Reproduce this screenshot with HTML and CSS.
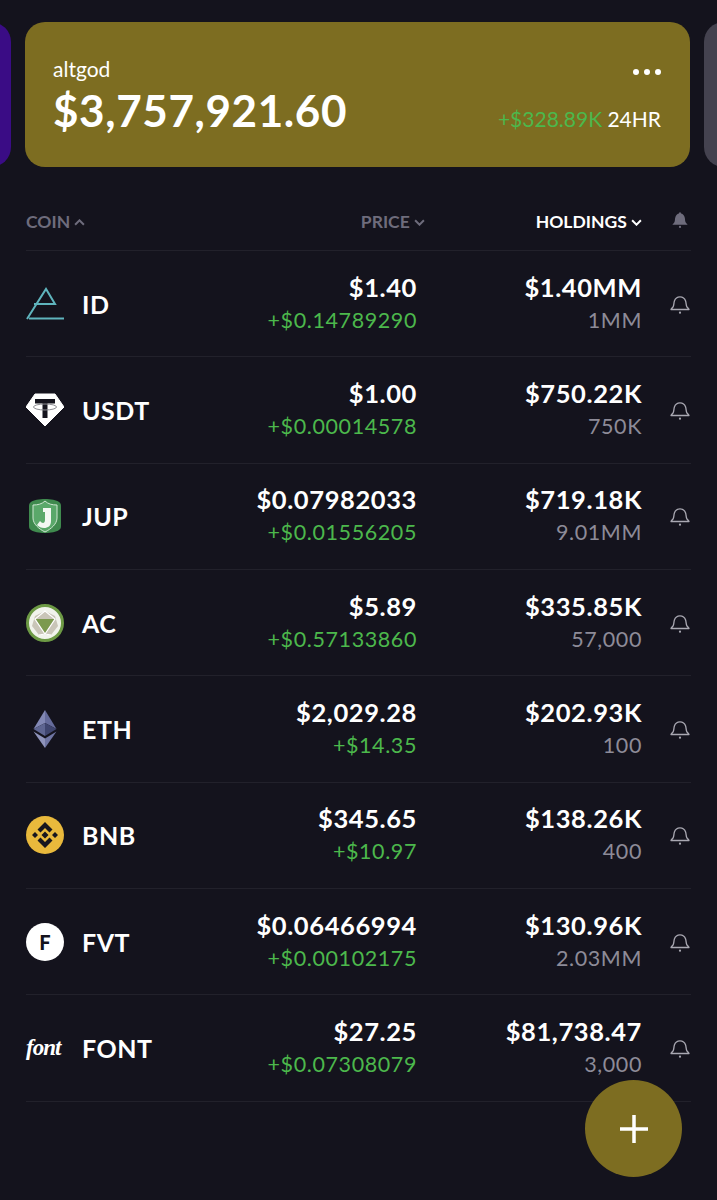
FILE: index.html
```html
<!DOCTYPE html>
<html lang="en">
<head>
    <meta charset="UTF-8">
    <meta name="viewport" content="width=device-width, initial-scale=1.0">
    <title>Portfolio</title>
    <link rel="stylesheet" href="styles.css">
</head>
<body>
    <svg class="defs" width="0" height="0">
        <symbol id="bell" viewBox="0 0 22 22">
            <path d="M2 16.5c0-.8 1.2-1.300 2.100-2.700 1-1.600.6-3.800 1.300-5.800C6.200 5.600 8.300 3.800 11 3.800s4.800 1.800 5.600 4.200c.7 2 .3 4.200 1.300 5.800.9 1.400 2.100 1.900 2.100 2.700z" fill="none" stroke="currentColor" stroke-width="1.300" stroke-linejoin="round"/>
            <circle cx="11" cy="19.700" r="1.100" fill="currentColor"/>
        </symbol>
    </svg>

    <div class="cards">
        <div class="side-card side-left"></div>
        <div class="card">
            <div class="card-top">
                <span class="card-name">altgod</span>
                <span class="dots"><i></i><i></i><i></i></span>
            </div>
            <div class="card-bottom">
                <span class="card-total">$3,757,921.60</span>
                <span class="card-change"><span class="green">+$328.89K</span> 24HR</span>
            </div>
        </div>
        <div class="side-card side-right"></div>
    </div>

    <div class="table">
        <div class="head">
            <span class="head-coin">COIN
                <svg class="caret" viewBox="0 0 10 6"><path d="M1 5l4-4 4 4" fill="none" stroke="currentColor" stroke-width="1.800"/></svg>
            </span>
            <span class="head-price">PRICE
                <svg class="caret" viewBox="0 0 10 6"><path d="M1 1l4 4 4-4" fill="none" stroke="currentColor" stroke-width="1.800"/></svg>
            </span>
            <span class="head-holdings">HOLDINGS
                <svg class="caret" viewBox="0 0 10 6"><path d="M1 1l4 4 4-4" fill="none" stroke="currentColor" stroke-width="1.800"/></svg>
            </span>
            <svg class="head-bell" viewBox="0 0 18 18">
                <path d="M1.500 13.800c0-.8 1.300-1.200 1.900-2.500.8-1.700.3-3.700 1.100-5.600C5.200 3.900 6.600 2.800 8 2.500 8 1.800 8.400 1.200 9 1.200s1 .6 1 1.300c1.400.3 2.800 1.400 3.500 3.200.8 1.900.3 3.900 1.100 5.600.6 1.300 1.900 1.700 1.900 2.500z" fill="currentColor"/>
                <circle cx="9" cy="15.900" r="1.100" fill="currentColor"/>
            </svg>
        </div>

        <div class="row">
            <div class="coin">
                <svg class="icon" viewBox="0 0 38 34">
                    <path d="M1 32L20 2l9 15H8" fill="none" stroke="#5fb4bd" stroke-width="2"/>
                    <path d="M3 31.500h35" stroke="#5fb4bd" stroke-width="2"/>
                </svg>
                <span class="symbol">ID</span>
            </div>
            <div class="price"><span class="big">$1.40</span><span class="green">+$0.14789290</span></div>
            <div class="holdings"><span class="big">$1.40MM</span><span class="grey">1MM</span></div>
            <svg class="bell"><use href="#bell"/></svg>
        </div>

        <div class="row">
            <div class="coin">
                <svg class="icon" viewBox="0 0 38 34">
                    <path d="M9 1h20l9 13-19 19L0 14z" fill="#fff" stroke="#fff" stroke-linejoin="round"/>
                    <path d="M9 6h20v4.500h-7.500V25h-5V10.500H9z" fill="#15141e"/>
                    <ellipse cx="19" cy="14" rx="11.500" ry="3" fill="none" stroke="#8c8c92" stroke-width="1"/>
                </svg>
                <span class="symbol">USDT</span>
            </div>
            <div class="price"><span class="big">$1.00</span><span class="green">+$0.00014578</span></div>
            <div class="holdings"><span class="big">$750.22K</span><span class="grey">750K</span></div>
            <svg class="bell"><use href="#bell"/></svg>
        </div>

        <div class="row">
            <div class="coin">
                <svg class="icon" viewBox="0 0 38 38">
                    <path d="M5 5c5-4 23-4 28 0 2 1 2 3 2 5v18c0 2 0 4-2 5-5 4-23 4-28 0-2-1-2-3-2-5V10c0-2 0-4 2-5z" fill="#3f8a4e"/>
                    <path d="M19 4c3 3 7 4 12 4v13c0 6-6 11-12 14C13 32 7 27 7 21V8c5 0 9-1 12-4z" fill="#5aa86a" stroke="#cfe6d2" stroke-width="1"/>
                    <path d="M17 11h8v13c0 5-3 7-7 7-3 0-5-1-7-3l3-4c1 1 2 2 3 2 1 0 2-1 2-3v-8h-2z" fill="#f2f7f2"/>
                </svg>
                <span class="symbol">JUP</span>
            </div>
            <div class="price"><span class="big">$0.07982033</span><span class="green">+$0.01556205</span></div>
            <div class="holdings"><span class="big">$719.18K</span><span class="grey">9.01MM</span></div>
            <svg class="bell"><use href="#bell"/></svg>
        </div>

        <div class="row">
            <div class="coin">
                <svg class="icon" viewBox="0 0 38 38">
                    <circle cx="19" cy="19" r="17.500" fill="#f1f3ec" stroke="#6d9a45" stroke-width="3"/>
                    <path d="M19 7l10 5 3 10-7 9H13l-7-9 3-10z" fill="#c9c5b8"/>
                    <path d="M9 15h20l-10 15z" fill="#7c9a4e"/>
                    <path d="M19 7L9 15l10 15 10-15zM13 31l6-1 6 1" fill="none" stroke="#fff" stroke-width="1.200"/>
                </svg>
                <span class="symbol">AC</span>
            </div>
            <div class="price"><span class="big">$5.89</span><span class="green">+$0.57133860</span></div>
            <div class="holdings"><span class="big">$335.85K</span><span class="grey">57,000</span></div>
            <svg class="bell"><use href="#bell"/></svg>
        </div>

        <div class="row">
            <div class="coin">
                <svg class="icon" viewBox="0 0 38 38">
                    <path d="M19 0L7.500 19 19 13z" fill="#8288b5"/>
                    <path d="M19 0l11.500 19L19 13z" fill="#656b9b"/>
                    <path d="M19 13L7.500 19 19 26z" fill="#5e6591"/>
                    <path d="M19 13l11.500 6L19 26z" fill="#3f456f"/>
                    <path d="M7.500 21.500L19 38V28.500z" fill="#8f94bb"/>
                    <path d="M30.500 21.500L19 38V28.500z" fill="#6f75a3"/>
                </svg>
                <span class="symbol">ETH</span>
            </div>
            <div class="price"><span class="big">$2,029.28</span><span class="green">+$14.35</span></div>
            <div class="holdings"><span class="big">$202.93K</span><span class="grey">100</span></div>
            <svg class="bell"><use href="#bell"/></svg>
        </div>

        <div class="row">
            <div class="coin">
                <svg class="icon" viewBox="0 0 38 38">
                    <circle cx="19" cy="19" r="19" fill="#e9b93c"/>
                    <path d="M19 6l7.500 7.500-3 3L19 12l-4.500 4.500-3-3zM19 32l-7.500-7.500 3-3L19 26l4.500-4.500 3 3zM6 19l3-3 3 3-3 3zM26 19l3-3 3 3-3 3zM19 15.500l3.500 3.500-3.500 3.500-3.500-3.500z" fill="#17161e"/>
                </svg>
                <span class="symbol">BNB</span>
            </div>
            <div class="price"><span class="big">$345.65</span><span class="green">+$10.97</span></div>
            <div class="holdings"><span class="big">$138.26K</span><span class="grey">400</span></div>
            <svg class="bell"><use href="#bell"/></svg>
        </div>

        <div class="row">
            <div class="coin">
                <span class="icon fvt-icon">F</span>
                <span class="symbol">FVT</span>
            </div>
            <div class="price"><span class="big">$0.06466994</span><span class="green">+$0.00102175</span></div>
            <div class="holdings"><span class="big">$130.96K</span><span class="grey">2.03MM</span></div>
            <svg class="bell"><use href="#bell"/></svg>
        </div>

        <div class="row">
            <div class="coin">
                <span class="icon font-icon">font</span>
                <span class="symbol">FONT</span>
            </div>
            <div class="price"><span class="big">$27.25</span><span class="green">+$0.07308079</span></div>
            <div class="holdings"><span class="big">$81,738.47</span><span class="grey">3,000</span></div>
            <svg class="bell"><use href="#bell"/></svg>
        </div>
    </div>

    <button class="add">
        <svg viewBox="0 0 28 28" width="28" height="28"><path d="M14 0v28M0 14h28" stroke="#fff" stroke-width="3.500"/></svg>
    </button>
</body>
</html>
```

FILE: styles.css
```css
html, body {
    margin: 0;
    height: 1200px;
    overflow: hidden;
}
body {
    position: relative;
    background-color: #14131d;
    color: #fff;
    font-family: Lato, "Open Sans", sans-serif;
}
.defs {
    display: block;
    height: 0;
}
.green {
    color: #4cb84c;
}
.cards {
    display: flex;
    gap: 14px;
    height: 145px;
    padding-top: 22px;
    margin-left: -55px;
    width: 840px;
}
.side-card {
    width: 66px;
    border-radius: 20px;
    flex: none;
}
.side-left {
    background-color: #3a0c85;
}
.side-right {
    background-color: #44424f;
}
.card {
    flex: none;
    width: 665px;
    box-sizing: border-box;
    padding: 33px 29px 0 28px;
    background-color: #7d6d21;
    border-radius: 20px;
}
.card-top {
    display: flex;
    justify-content: space-between;
    align-items: center;
    height: 26px;
}
.card-name {
    font-size: 21px;
}
.dots {
    display: flex;
    gap: 5px;
    margin-top: 7px;
}
.dots i {
    width: 6px;
    height: 6px;
    border-radius: 50%;
    background-color: #fff;
}
.card-bottom {
    display: flex;
    justify-content: space-between;
    align-items: baseline;
    margin-top: 1px;
}
.card-total {
    font-size: 44px;
    font-weight: 700;
    line-height: 56px;
    letter-spacing: 0.6px;
}
.card-change {
    font-size: 21px;
}
.table {
    margin: 0 26px;
}
.head {
    display: grid;
    grid-template-columns: 1fr 130px 217px 49px;
    align-items: center;
    height: 84px;
    box-sizing: border-box;
    padding-top: 26px;
    border-bottom: 1px solid #22212b;
    color: #6e6c7c;
    font-size: 17.500px;
    font-weight: 700;
}
.head-price {
    text-align: right;
}
.head-holdings {
    text-align: right;
    color: #fff;
}
.caret {
    width: 11px;
    height: 7px;
    vertical-align: 2px;
}
.head-bell {
    width: 18px;
    height: 18px;
    justify-self: end;
    margin-right: 2px;
    margin-top: -4px;
}
.row {
    display: grid;
    grid-template-columns: 1fr 220px 225px 49px;
    align-items: center;
    height: 106.330px;
    box-sizing: border-box;
    border-bottom: 1px solid #22212b;
}
.coin {
    display: flex;
    align-items: center;
    gap: 18px;
}
.icon {
    display: block;
    flex: none;
    width: 38px;
    height: 38px;
}
.symbol {
    font-size: 25px;
    font-weight: 700;
    letter-spacing: 0.5px;
}
.fvt-icon {
    background-color: #fff;
    border-radius: 50%;
    color: #14131d;
    font-size: 20px;
    font-weight: 900;
    line-height: 38px;
    text-align: center;
}
.font-icon {
    font-family: "Liberation Serif", serif;
    font-style: italic;
    font-weight: 700;
    font-size: 23px;
    line-height: 38px;
    letter-spacing: -1px;
    white-space: nowrap;
}
.price, .holdings {
    display: flex;
    flex-direction: column;
    align-items: flex-end;
    font-size: 21.500px;
    line-height: 33px;
    letter-spacing: 0.6px;
}
.big {
    font-size: 25.500px;
    font-weight: 700;
}
.grey {
    color: #8d8b98;
}
.bell {
    width: 22px;
    height: 22px;
    justify-self: end;
    margin-top: 0;
    color: #a9a8b2;
}
.add {
    position: absolute;
    left: 585px;
    top: 1080px;
    width: 97px;
    height: 97px;
    padding: 0;
    border: 0;
    border-radius: 50%;
    background-color: #7d6d21;
    display: flex;
    align-items: center;
    justify-content: center;
}
```
